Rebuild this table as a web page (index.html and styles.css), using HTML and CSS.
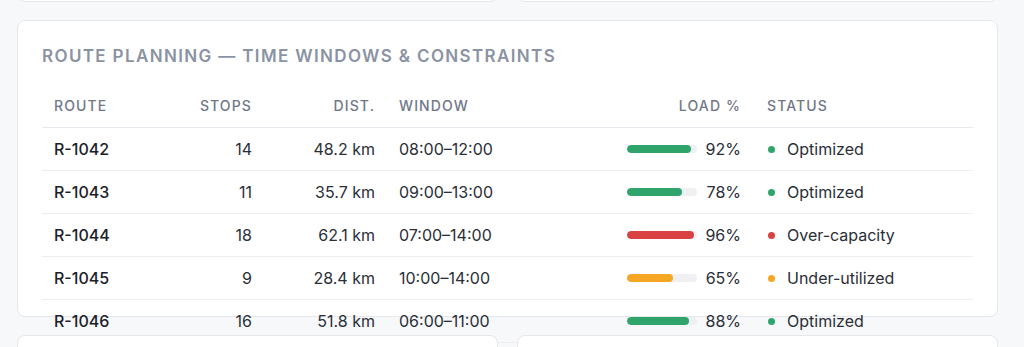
FILE: index.html
```html
<!DOCTYPE html>
<html lang="en">
<head>
<meta charset="utf-8">
<title>Route Planning</title>
<link rel="stylesheet" href="styles.css">
</head>
<body>
<div class="page">
  <div class="card card-top"></div>
  <div class="card card-top"></div>

  <section class="card card-main">
    <h2 class="card-title">Route Planning — Time Windows &amp; Constraints</h2>
    <table class="routes">
      <colgroup>
        <col class="c-route"><col class="c-stops"><col class="c-dist"><col class="c-window"><col class="c-load"><col class="c-status">
      </colgroup>
      <thead>
        <tr>
          <th>Route</th>
          <th class="num">Stops</th>
          <th class="num">Dist.</th>
          <th>Window</th>
          <th class="num">Load %</th>
          <th class="st">Status</th>
        </tr>
      </thead>
      <tbody>
        <tr>
          <td class="rid">R-1042</td><td class="num">14</td><td class="num">48.2 km</td><td>08:00–12:00</td>
          <td class="num"><div class="load"><span class="bar"><span class="fill green" style="width:92%"></span></span><span class="pct">92%</span></div></td>
          <td class="st"><span class="status"><span class="dot green"></span>Optimized</span></td>
        </tr>
        <tr>
          <td class="rid">R-1043</td><td class="num">11</td><td class="num">35.7 km</td><td>09:00–13:00</td>
          <td class="num"><div class="load"><span class="bar"><span class="fill green" style="width:78%"></span></span><span class="pct">78%</span></div></td>
          <td class="st"><span class="status"><span class="dot green"></span>Optimized</span></td>
        </tr>
        <tr>
          <td class="rid">R-1044</td><td class="num">18</td><td class="num">62.1 km</td><td>07:00–14:00</td>
          <td class="num"><div class="load"><span class="bar"><span class="fill red" style="width:96%"></span></span><span class="pct">96%</span></div></td>
          <td class="st"><span class="status"><span class="dot red"></span>Over-capacity</span></td>
        </tr>
        <tr>
          <td class="rid">R-1045</td><td class="num">9</td><td class="num">28.4 km</td><td>10:00–14:00</td>
          <td class="num"><div class="load"><span class="bar"><span class="fill amber" style="width:65%"></span></span><span class="pct">65%</span></div></td>
          <td class="st"><span class="status"><span class="dot amber"></span>Under-utilized</span></td>
        </tr>
        <tr>
          <td class="rid">R-1046</td><td class="num">16</td><td class="num">51.8 km</td><td>06:00–11:00</td>
          <td class="num"><div class="load"><span class="bar"><span class="fill green" style="width:88%"></span></span><span class="pct">88%</span></div></td>
          <td class="st"><span class="status"><span class="dot green"></span>Optimized</span></td>
        </tr>
      </tbody>
    </table>
  </section>

  <div class="card card-bottom"></div>
  <div class="card card-bottom"></div>
</div>
</body>
</html>
```

FILE: styles.css
```css
* { box-sizing: border-box; }

html, body {
  margin: 0;
  padding: 0;
  background: #f7f8fa;
  overflow: hidden;
  height: 347px;
}

body {
  font-family: Inter, "Noto Sans", sans-serif;
  color: #1f2430;
  font-size: 16px;
}

.page {
  display: grid;
  grid-template-columns: 481px 481px;
  column-gap: 19px;
  row-gap: 18px;
  padding: 0 0 0 17px;
  margin-top: -40px;
}

.card {
  background: #ffffff;
  border: 1px solid #e5e7ec;
  border-radius: 8px;
}

.card-top {
  height: 42px;
}

.card-bottom {
  height: 80px;
}

.card-main {
  grid-column: 1 / span 2;
  height: 297px;
  padding: 24px 24px 0 24px;
  overflow: visible;
}

.card-title {
  margin: 0 0 17px 0;
  font-size: 17px;
  line-height: 22px;
  font-weight: 600;
  letter-spacing: 0.08em;
  text-transform: uppercase;
  color: #8a93a3;
}

.routes {
  width: 931px;
  border-collapse: collapse;
  table-layout: fixed;
}

.c-route { width: 130px; }
.c-stops { width: 92px; }
.c-dist { width: 123px; }
.c-window { width: 149px; }
.c-load { width: 217px; }
.c-status { width: 220px; }

.routes th {
  text-align: left;
  font-size: 14px;
  line-height: 18px;
  font-weight: 500;
  letter-spacing: 0.08em;
  text-transform: uppercase;
  color: #6f7889;
  padding: 13px 12px 12px 12px;
  border-bottom: 1px solid #e6e8ed;
}

.routes td {
  padding: 12px;
  line-height: 18px;
  border-bottom: 1px solid #eceef2;
  color: #2a2e37;
  white-space: nowrap;
}

.routes .num { text-align: right; }

.routes .st { padding-left: 14px; }

.routes td.rid {
  font-weight: 500;
  color: #1c2029;
}

.load {
  display: flex;
  align-items: center;
  justify-content: flex-end;
  gap: 7px;
}

.bar {
  display: block;
  width: 70px;
  height: 8px;
  border-radius: 4px;
  background: #eef0f3;
  overflow: hidden;
}

.fill {
  display: block;
  height: 100%;
  border-radius: 4px;
}

.pct {
  width: 37px;
  text-align: right;
}

.status {
  display: flex;
  align-items: center;
  gap: 12px;
}

.dot {
  width: 7px;
  height: 7px;
  border-radius: 50%;
  margin-left: 1px;
  flex: none;
}

.green { background: #2fa56b; }
.red { background: #d94242; }
.amber { background: #f5a623; }
```
